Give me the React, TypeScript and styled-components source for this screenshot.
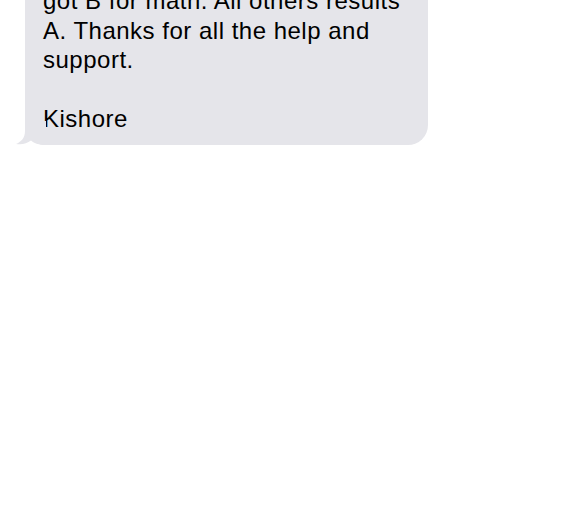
import React from "react";
import styled, { createGlobalStyle } from "styled-components";

const Global = createGlobalStyle`
  html, body { margin: 0; padding: 0; background: #ffffff; }
  body { font-family: "Liberation Sans", Arial, sans-serif; }
`;

const Page = styled.div`
  width: 575px;
  height: 510px;
  overflow: hidden;
  background: #ffffff;
`;

const Row = styled.div`
  display: flex;
  padding-left: 25px;
`;

const Bubble = styled.div`
  position: relative;
  width: 403px;
  box-sizing: border-box;
  margin-top: -24px;
  padding: 10px 18px 11px 18px;
  background: #e5e5ea;
  border-radius: 20px;
  color: #000000;
  font-size: 24px;
  line-height: 29.5px;
  letter-spacing: 0.5px;
`;

const Line = styled.div`
  white-space: nowrap;
  min-height: 29.5px;
`;

const Tail = styled.svg`
  position: absolute;
  left: -9px;
  bottom: 0;
  width: 30px;
  height: 24px;
`;

export default function App() {
  return (
    <Page>
      <Global />
      <Row>
        <Bubble>
          <Tail viewBox="0 0 30 24">
            <path
              d="M9 0 L9 10 C9 17 5 21 0 23 C6 24 11 22.5 15 19.5 C18 22.5 24 24 30 24 L30 0 Z"
              fill="#e5e5ea"
            />
          </Tail>
          <Line>got B for math. All others results</Line>
          <Line>A. Thanks for all the help and</Line>
          <Line>support.</Line>
          <Line />
          <Line>Kishore</Line>
        </Bubble>
      </Row>
    </Page>
  );
}
